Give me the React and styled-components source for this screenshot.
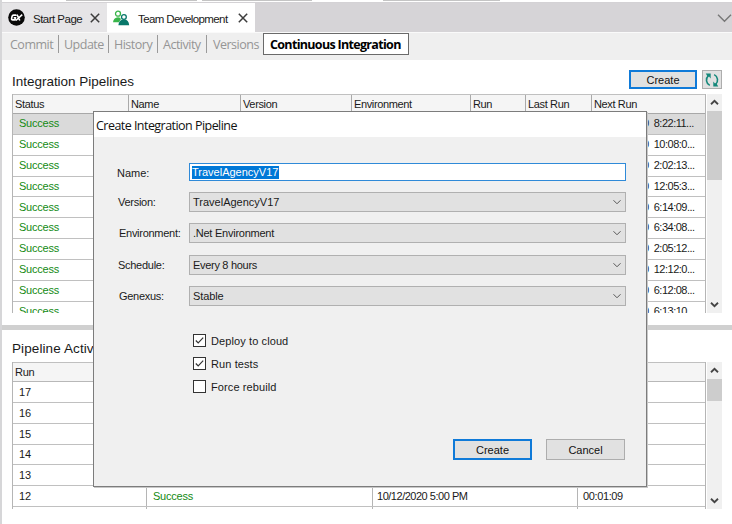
import React from "react";
import styled, { createGlobalStyle, css } from "styled-components";

const Global = createGlobalStyle`
  *{box-sizing:border-box}
  body{margin:0;background:#fff;overflow:hidden;font:11px "Liberation Sans",Arial,sans-serif;color:#1a1a1a}
`;

const Window = styled.div`position:relative;width:732px;height:524px;overflow:hidden;background:#fff;border-left:2px solid #d6d6d8;display:flex;flex-direction:column;`;
const Text = styled.span`white-space:pre;font-size:${p => p.$size || 11}px;letter-spacing:${p => p.$ls ?? -0.22}px;color:${p => p.$color || "inherit"};`;

const TopStrip = styled.div`height:3px;flex:none;display:flex;background:#fff;margin-left:-2px;border-bottom:1px solid #d4d2d5;`;
const StripPiece = styled.div`width:${p => p.$w}px;height:${p => p.$h || 1}px;background:${p => p.$c};`;

const TabBar = styled.div`height:29px;flex:none;display:flex;align-items:stretch;background:#d6d4d7;`;
const Tab = styled.div`width:${p => p.$w}px;display:flex;align-items:center;padding-left:${p => p.$pl}px;background:${p => (p.$active ? "#fff" : "#e6e5e7")};
  svg{flex:none;display:block}`;
const TabLabel = styled(Text)`margin:2px 0 0 ${p => p.$ml}px;width:${p => p.$w}px;`;
const TabMenu = styled.div`margin-left:auto;display:flex;align-items:center;padding-top:1px;`;

const Toolbar = styled.div`height:28px;flex:none;display:flex;align-items:flex-start;background:#efefef;border-top:1px solid #fafafa;padding-left:2px;font-family:"Open Sans","Noto Sans",sans-serif;`;
const ToolItem = styled.div`width:${p => p.$w}px;height:18px;margin-top:2px;padding-left:${p => p.$pl}px;border-right:${p => (p.$last ? "0" : "1px solid #9a9a9a")};line-height:19px;color:#959595;`;
const ToolActive = styled.div`width:146px;height:22px;border:1px solid #6a6a6a;background:#fff;color:#000;font-weight:700;line-height:21px;padding-left:6px;`;

const Pane = styled.section`height:${p => p.$h}px;flex:none;padding-left:10px;display:flex;flex-direction:column;`;
const Splitter = styled.div`height:5px;flex:none;background:#d0d0d0;`;
const PaneHead = styled.div`height:${p => p.$h}px;flex:none;display:flex;align-items:flex-start;`;
const PaneTitle = styled.h2`margin:${p => p.$mt}px auto 0 0;font-weight:400;line-height:18px;font-size:14px;`;
const Button = styled.button`width:${p => p.$w}px;height:${p => p.$h}px;padding:0;background:#e1e1e1;border:${p => (p.$primary ? "2px solid #0f7ad8" : "1px solid #adadad")};font:inherit;color:#111;display:flex;align-items:center;justify-content:center;`;
const HeadButton = styled(Button)`margin-top:10px;`;
const IconButton = styled(Button)`margin:10px 10px 0 5px;`;

const GridWrap = styled.div`display:flex;height:${p => p.$h}px;`;
const Table = styled.div`width:694px;flex:none;overflow:hidden;border-left:1px solid #b5b5b5;border-right:1px solid #b5b5b5;display:flex;flex-direction:column;`;
const cols = css`display:grid;grid-template-columns:${p => p.$cols};flex:none;`;
const HeadRow = styled.div`${cols} height:${p => p.$h}px;border-top:1px solid #c0c0c0;border-bottom:1px solid ${p => p.$line || "#a8a8a8"};background:#f5f5f5;`;
const HeadCell = styled.div`padding-left:2px;display:flex;align-items:center;& + &{border-left:1px solid #aaa}`;
const Row = styled.div`${cols} height:${p => p.$h || 20.85}px;border-bottom:1px solid #c0c0c0;background:${p => (p.$selected ? "#dadada" : "#fff")};`;
const Cell = styled.div`
  display:flex;
  align-items:center;
  padding:0 0 ${p => p.$pb || 0}px ${p => p.$pl || 6}px;
  border-left:${p => (p.$line ? "1px solid #b5b5b5" : "0")};
`;

const Scroll = styled.div`width:15px;background:#f0f0f0;display:flex;flex-direction:column;margin-left:1px;svg{display:block;flex:none}`;
const Thumb = styled.div`height:${p => p.$h}px;background:#cdcdcd;margin-bottom:auto;`;

const Dialog = styled.div`position:absolute;left:91px;top:111px;width:554px;height:376px;border:1px solid #7c7c7c;background:#f0f0f0;box-shadow:1px 1px 0 #c8c8c8;display:flex;flex-direction:column;`;
const DialogTitle = styled.div`height:25px;flex:none;background:#fff;padding:0 0 0 2px;font-family:"Open Sans","Noto Sans",sans-serif;line-height:27px;color:#111;`;
const Form = styled.div`padding:26px 0 0 0;display:flex;flex-direction:column;`;
const Field = styled.div`display:flex;height:${p => p.$h}px;align-items:flex-start;`;
const FieldLabel = styled.label`width:95px;flex:none;padding:${p => p.$pt}px 0 0 ${p => p.$pl}px;line-height:13px;white-space:nowrap;`;
const Input = styled.div`width:437px;height:18px;border:1px solid #2f8ad8;background:#fff;padding:2px 0 0 2px;line-height:13px;color:#fff;`;
const Selected = styled.span`display:inline-block;width:87px;height:13px;background:#0078d7;`;
const Select = styled.div`width:437px;height:20px;border:1px solid #b0b0b0;background:#e1e1e1;display:flex;align-items:center;padding-left:3px;padding-right:3px;svg{margin-left:auto}`;
const Checks = styled.div`padding:17px 0 0 99px;display:flex;flex-direction:column;gap:10px;`;
const Check = styled.div`height:13.2px;display:flex;align-items:center;gap:5px;svg{flex:none}`;
const Actions = styled.div`display:flex;gap:14px;margin:auto 0 26px 359px;`;

const Chevron = ({ w = 15, h = 17, up, color = "#444", s = 1.8, r = 3.5 }) => (
  <svg width={w} height={h} viewBox={`0 0 ${w} ${h}`} fill="none" stroke={color} strokeWidth={s}>
    <path d={up ? `M${w / 2 - r} ${h / 2 + r / 2}l${r} ${-r} ${r} ${r}` : `M${w / 2 - r} ${h / 2 - r / 2}l${r} ${r} ${r} ${-r}`} />
  </svg>
);
const Close = () => (
  <svg width="10" height="10" viewBox="0 0 10 10" stroke="#3c3c3c" strokeWidth="1.5"><path d="M.8.8l8.4 8.4M9.2.8L.8 9.2" /></svg>
);
const GxLogo = () => (
  <svg width="17" height="17" viewBox="0 0 17 17"><circle cx="8.5" cy="8.5" r="8.3" fill="#090909" />
    <g fill="none" stroke="#fff" strokeWidth="1.6"><path d="M8.3 6.1H5.6Q4.4 6.1 4.1 7.3L3.6 9.6Q3.4 10.9 4.6 10.9H6.9L7.4 8.7H5.7M9 5.6L11.8 11.5M14.2 5.6L7.9 11.5" /></g></svg>
);
const TeamIcon = () => (
  <svg width="17" height="16" viewBox="0 0 17 16"><path d="M0 12.3Q.5 7.6 5 7.2Q7.2 7.2 8 9L6 12.3Z" fill="#39b54a" /><circle cx="5" cy="3.7" r="2.5" fill="#fff" stroke="#39b54a" strokeWidth="1.3" />
    <path d="M5.4 15.2Q5.8 9.6 11 9.6Q15.8 9.6 16.2 15.2Z" fill="#08776a" /><circle cx="10.9" cy="7" r="2.4" fill="#fff" stroke="#08776a" strokeWidth="1.3" /></svg>
);
const Refresh = () => (
  <svg width="16" height="16" viewBox="0 0 16 16"><path d="M5.8 13.4A6 6 0 0 1 4.4 3.6M10.2 2.6A6 6 0 0 1 11.6 12.4" fill="none" stroke="#16887b" strokeWidth="1.6" />
    <path d="M1.8 1.5H6.7V6.4L5 4.6 3.6 4.8ZM14.2 14.5H9.3V9.6L11 11.4 12.4 11.2Z" fill="#16887b" /></svg>
);
const Box = ({ on }) => (
  <svg width="13" height="13" viewBox="0 0 13 13" fill="none" stroke="#333"><rect x=".5" y=".5" width="12" height="12" fill="#fff" />{on && <path d="M2.8 6.5L5.2 9L10.2 3.7" strokeWidth="1.2" />}</svg>
);

const strip = [[66, "#fff"], [131, "#c4c4c4"], [5, "#fff"], [110, "#c4c4c4"], [71, "#fff"], [117, "#c4c4c4"], [232, "#fff"]];
const tools = [["Commit", 55, 6], ["Update", 50, 5], ["History", 49, 5], ["Activity", 49, 5], ["Versions", 56, 6]];
const heads = ["Status", "Name", "Version", "Environment", "Run", "Last Run", "Next Run"];
const times = ["8:22:11...", "10:08:0...", "2:02:13...", "12:05:3...", "6:14:09...", "6:34:08...", "2:05:12...", "12:12:0...", "6:12:08...", "6:13:10"];
const topCols = "115px 112px 111px 119px 55px 66px 1fr";
const lowCols = "133px 226px 205px 1fr";
const runs = [
  { id: 17 }, { id: 16 }, { id: 15 }, { id: 14 }, { id: 13 },
  { id: 12, status: "Success", started: "10/12/2020 5:00 PM", duration: "00:01:09" },
];
const selects = [
  ["Version:", "TravelAgencyV17", 24, 31, 0],
  ["Environment:", ".Net Environment", 25, 32, -0.25],
  ["Schedule:", "Every 8 hours", 24, 31, -0.3],
  ["Genexus:", "Stable", 25, 31, -0.1],
];

export default function App() {
  return (
    <Window>
      <Global />
      <TopStrip>{strip.map(([w, c], i) => <StripPiece key={i} $w={w} $c={c} />)}</TopStrip>
      <TabBar>
        <Tab $w={105} $pl={6}><GxLogo /><TabLabel $ml={8} $w={57} $size={11.5} $ls={-0.52}>Start Page</TabLabel><Close /></Tab>
        <Tab $active $w={148} $pl={6}><TeamIcon /><TabLabel $ml={8} $w={100} $size={11.5} $ls={-0.6}>Team Development</TabLabel><Close /></Tab>
        <TabMenu><Chevron w={15} h={14} r={6.5} s={1.4} color="#777" /></TabMenu>
      </TabBar>
      <Toolbar>
        {tools.map(([t, w, pl], i) => <ToolItem key={t} $w={w} $pl={pl} $last={i === 4}><Text $size={12.5} $ls={-0.5}>{t}</Text></ToolItem>)}
        <ToolActive><Text $size={12.5} $ls={-0.68}>Continuous Integration</Text></ToolActive>
      </Toolbar>
      <Pane $h={265}>
        <PaneHead $h={34}>
          <PaneTitle $mt={12}><Text $size={13.5} $ls={-0.02}>Integration Pipelines</Text></PaneTitle>
          <HeadButton $primary $w={68} $h={19}><Text $ls={0}>Create</Text></HeadButton>
          <IconButton $w={20} $h={19}><Refresh /></IconButton>
        </PaneHead>
        <GridWrap $h={219}>
          <Table>
            <HeadRow $cols={topCols} $h={20}>{heads.map(h => <HeadCell key={h}><Text $ls={-0.36}>{h}</Text></HeadCell>)}</HeadRow>
            {times.map((t, i) => (
              <Row key={t} $cols="624px 1fr" $selected={i === 0}><Cell $pb={1.6}><Text $color="#138a13">Success</Text></Cell><Cell $pb={1.6}><Text $ls={-0.5}>{"0  " + t}</Text></Cell></Row>
            ))}
          </Table>
          <Scroll><Chevron up /><Thumb $h={69} /><Chevron /></Scroll>
        </GridWrap>
      </Pane>
      <Splitter />
      <Pane $h={194}>
        <PaneHead $h={32}><PaneTitle $mt={9}><Text $size={13.5} $ls={0.1}>Pipeline Activity</Text></PaneTitle></PaneHead>
        <GridWrap $h={147}>
          <Table>
            <HeadRow $cols={lowCols} $h={20} $line="#b8b8b8"><HeadCell><Text>Run</Text></HeadCell></HeadRow>
            {runs.map(r => (
              <Row key={r.id} $cols={lowCols}>
                <Cell><Text>{r.id}</Text></Cell>
                <Cell $line><Text $color="#138a13">{r.status}</Text></Cell>
                <Cell $line $pl={4}><Text $ls={-0.48}>{r.started}</Text></Cell>
                <Cell $line $pl={5}><Text $ls={-0.38}>{r.duration}</Text></Cell>
              </Row>
            ))}
            <Row $cols={lowCols}><Cell /><Cell $line /><Cell $line /><Cell $line /></Row>
          </Table>
          <Scroll><Chevron up /><Thumb $h={22} /><Chevron /></Scroll>
        </GridWrap>
      </Pane>
      <Dialog>
        <DialogTitle><Text $size={12.5} $ls={-0.54}>Create Integration Pipeline</Text></DialogTitle>
        <Form>
          <Field $h={29}><FieldLabel $pt={4} $pl={23}><Text $ls={0}>Name:</Text></FieldLabel><Input><Selected><Text $ls={0}>TravelAgencyV17</Text></Selected></Input></Field>
          {selects.map(([l, v, pl, h, ls]) => (
            <Field key={l} $h={h}><FieldLabel $pt={4} $pl={pl}><Text $ls={-0.28}>{l}</Text></FieldLabel><Select><Text $ls={ls}>{v}</Text><Chevron w={10} h={10} s={1} color="#555" /></Select></Field>
          ))}
        </Form>
        <Checks>
          <Check><Box on /><Text $ls={0.1}>Deploy to cloud</Text></Check>
          <Check><Box on /><Text $ls={0.1}>Run tests</Text></Check>
          <Check><Box /><Text $ls={0.1}>Force rebuild</Text></Check>
        </Checks>
        <Actions><Button $primary $w={79} $h={21}><Text $ls={0}>Create</Text></Button><Button $w={79} $h={21}><Text $ls={0}>Cancel</Text></Button></Actions>
      </Dialog>
    </Window>
  );
}
